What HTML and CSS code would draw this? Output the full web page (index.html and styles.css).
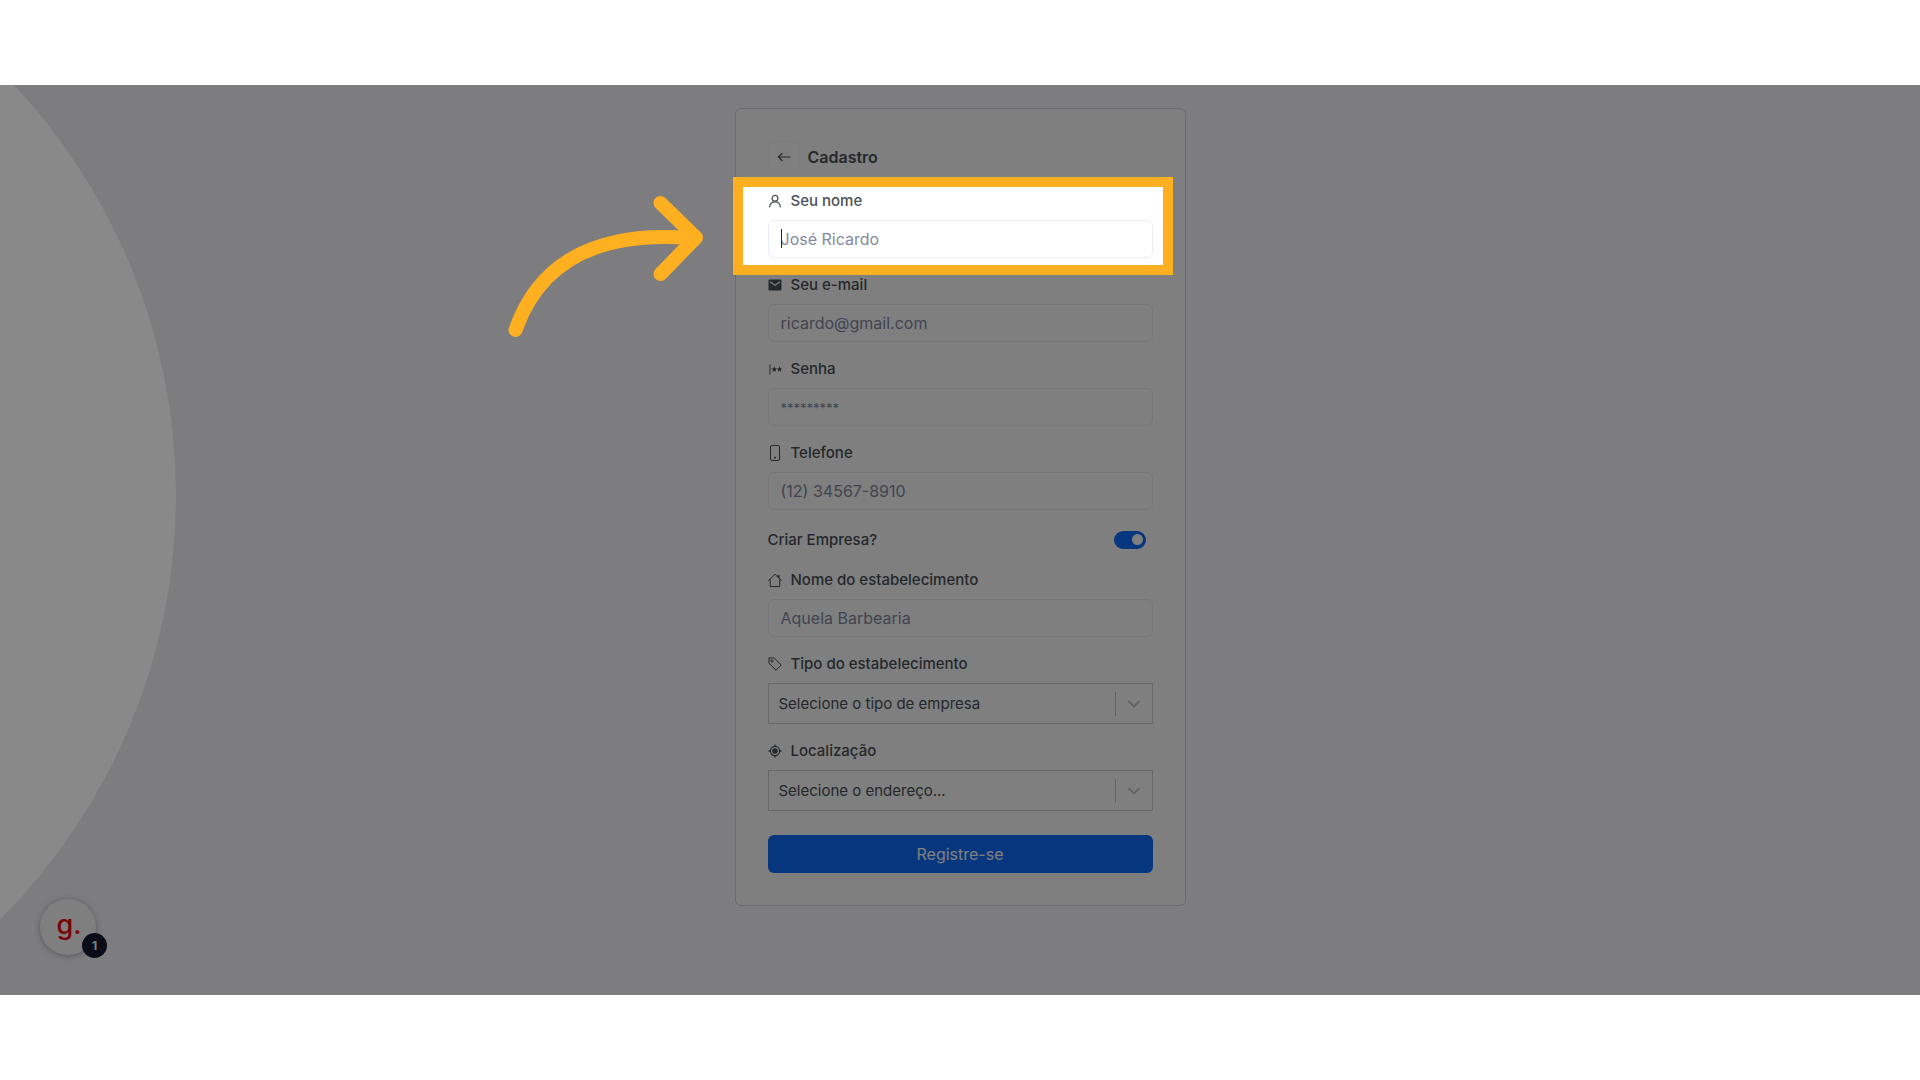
FILE: index.html
```html
<!DOCTYPE html>
<html lang="pt-BR">
<head>
<meta charset="utf-8">
<meta name="viewport" content="width=device-width, initial-scale=1">
<title>Cadastro</title>
<link rel="stylesheet" href="styles.css">
</head>
<body>
<main class="stage">
  <div class="backdrop-circle"></div>
  <form class="card">
    <header class="card-header">
      <button class="back" type="button" aria-label="Voltar">
        <svg width="14" height="14" viewBox="0 0 14 14" fill="none" stroke="currentColor" stroke-width="1.200" stroke-linecap="round" stroke-linejoin="round"><path d="M13 7H1.500M5 3.500 1.500 7 5 10.500"/></svg>
      </button>
      <h1 class="title">Cadastro</h1>
    </header>

    <div class="field highlighted">
      <label class="label" for="nome">
        <svg class="icon" viewBox="0 0 14 14" fill="none" stroke="currentColor" stroke-width="1.200" stroke-linecap="round"><circle cx="7" cy="4.300" r="2.900"/><path d="M1.700 13c.2-3.200 2.300-5.200 5.300-5.200s5.100 2 5.300 5.200"/></svg>
        Seu nome
      </label>
      <div class="caret-box"><input class="input" id="nome" type="text" placeholder="José Ricardo"></div>
      <div class="spotlight">
        <svg class="arrow" width="210" height="155" viewBox="500 190 210 155" fill="none" stroke="currentColor" stroke-width="14" stroke-linecap="round" stroke-linejoin="round"><path d="M515.500 330C537 268 590 230 690 238"/><path d="M660.500 203 696 237.500 660.500 274"/></svg>
      </div>
    </div>

    <div class="field">
      <label class="label" for="email">
        <svg class="icon" viewBox="0 0 14 14"><rect x=".5" y="1.500" width="13" height="11" rx="1.300" fill="currentColor"/><path class="cut" d="M2 3.700 7 7.200l5-3.500" fill="none" stroke-width="1.200"/></svg>
        Seu e-mail
      </label>
      <input class="input" id="email" type="email" placeholder="ricardo@gmail.com">
    </div>

    <div class="field">
      <label class="label" for="senha">
        <svg class="icon" viewBox="0 0 14 14" fill="currentColor"><path d="M1.500 2.500h1v10h-1z"/><path d="m6.300 4.300.8 1.900 2 .2-1.500 1.300.45 2-1.750-1.050L4.550 9.700 5 7.700 3.500 6.400l2-.2zM11.700 4.300l.8 1.900 1.500.2-1.300 1.300.45 2-1.450-1.050-1.750 1.050.45-2L8.900 6.400l2-.2z"/></svg>
        Senha
      </label>
      <input class="input" id="senha" type="password" placeholder="*********">
    </div>

    <div class="field">
      <label class="label" for="telefone">
        <svg class="icon icon-tall" viewBox="0 0 14 16" fill="none" stroke="currentColor"><rect x="2.500" y=".5" width="9" height="15" rx="1.500"/><circle cx="7" cy="12.700" r="1" fill="currentColor" stroke="none"/></svg>
        Telefone
      </label>
      <input class="input" id="telefone" type="tel" placeholder="(12) 34567-8910">
    </div>

    <div class="switch-row">
      <label class="label" for="empresa">Criar Empresa?</label>
      <input class="switch" id="empresa" type="checkbox" role="switch" checked>
    </div>

    <div class="field">
      <label class="label" for="estabelecimento">
        <svg class="icon" viewBox="0 0 14 14" fill="none" stroke="currentColor" stroke-linecap="round" stroke-linejoin="round"><path d="M.6 7.700 7 1.200l6.400 6.500M2.200 6.500v7h9.600v-7"/><path d="M10 2.200h1.300v3.200L10 4z" fill="currentColor" stroke-width=".5"/></svg>
        Nome do estabelecimento
      </label>
      <input class="input" id="estabelecimento" type="text" placeholder="Aquela Barbearia">
    </div>

    <div class="field">
      <label class="label" for="tipo">
        <svg class="icon" viewBox="0 0 14 14" fill="none" stroke="currentColor" stroke-linejoin="round"><path d="M.9.900h5.200l7.100 7.100-5.200 5.200L.9 6.100z"/><circle cx="3.900" cy="3.900" r="1.100"/></svg>
        Tipo do estabelecimento
      </label>
      <div class="select-box">
        <select class="select" id="tipo"><option>Selecione o tipo de empresa</option></select>
        <svg class="chevron" viewBox="0 0 38 24" fill="none" stroke="currentColor"><path d="M.5 0v24"/><path d="m14 9.500 5 5 5-5" stroke-width="2" stroke-linecap="round" stroke-linejoin="round"/></svg>
      </div>
    </div>

    <div class="field">
      <label class="label" for="local">
        <svg class="icon" viewBox="0 0 14 14" fill="none" stroke="currentColor"><circle cx="7" cy="7" r="4.600" stroke-width="1.100"/><circle cx="7" cy="7" r="2.700" fill="currentColor" stroke="none"/><path d="M7 .5v2M7 11.500v2M.5 7h2M11.500 7h2" stroke-width="1.300"/></svg>
        Localização
      </label>
      <div class="select-box">
        <select class="select" id="local"><option>Selecione o endereço...</option></select>
        <svg class="chevron" viewBox="0 0 38 24" fill="none" stroke="currentColor"><path d="M.5 0v24"/><path d="m14 9.500 5 5 5-5" stroke-width="2" stroke-linecap="round" stroke-linejoin="round"/></svg>
      </div>
    </div>

    <button class="submit" type="submit">Registre-se</button>
  </form>

  <button class="widget" type="button"><span class="logo">g.</span><span class="badge">1</span></button>
</main>
</body>
</html>
```
FILE: styles.css
```css
* {
  box-sizing: border-box;
}

body {
  margin: 0;
  min-height: 100vh;
  display: flex;
  flex-direction: column;
  justify-content: center;
  background: #fff;
  color: #495057;
  font-family: Inter, "Liberation Sans", sans-serif;
  font-size: 15px;
}

input,
select,
button {
  font: inherit;
  color: inherit;
}

.stage {
  position: relative;
  display: flex;
  justify-content: center;
  overflow: hidden;
  padding: 23px 16px 89px;
  background: #faf8ff;
}

/* Sits over the dimming layer */
.backdrop-circle {
  position: absolute;
  z-index: 3;
  top: -190px;
  left: -1024px;
  width: 1200px;
  height: 1200px;
  border-radius: 50%;
  background: #898989;
}

.card {
  display: flex;
  flex-direction: column;
  gap: 16px;
  width: 100%;
  max-width: 451px;
  padding: 32px;
  border: 1px solid #d4d4da;
  border-radius: 6px;
  background: #fff;
}

.card-header {
  display: flex;
  align-items: center;
  gap: 8px;
  margin-bottom: 2px;
}

.back {
  display: grid;
  place-items: center;
  width: 32px;
  height: 31px;
  padding: 0;
  border: 1px solid #f8f8f8;
  border-radius: 4px;
  background: none;
}

.title {
  margin: 0;
  font-size: 16px;
  font-weight: 600;
}

.field {
  display: flex;
  flex-direction: column;
  gap: 8px;
}

.label {
  display: flex;
  align-items: center;
  gap: 9px;
  font-weight: 500;
  line-height: 22px;
}

.icon {
  width: 14px;
  height: 14px;
}

.icon-tall {
  height: 16px;
}

.cut {
  stroke: #fff;
}

.input {
  width: 100%;
  height: 38px;
  padding: 0 12px;
  border: 1px solid #e9edf7;
  border-radius: 6px;
  background: #fff;
  font-size: 16px;
}

.input::placeholder {
  color: #8389a3;
  opacity: 1;
}

.input[type="password"]::placeholder {
  font-size: 13px;
}

.caret-box {
  position: relative;
  display: flex;
}

.caret-box::before {
  content: "";
  position: absolute;
  top: 9px;
  left: 13px;
  width: 1px;
  height: 19px;
  background: #212529;
}

.highlighted {
  position: relative;
  z-index: 2;
}

/* The spread shadow dims everything outside the frame */
.spotlight {
  position: absolute;
  inset: -13px -20px -17px -35px;
  border: 10px solid #ffb020;
  box-shadow: 0 0 0 4000px rgba(0, 0, 0, 0.5);
  pointer-events: none;
}

.arrow {
  position: absolute;
  top: 3px;
  left: -243px;
  color: #ffb020;
}

.switch-row {
  display: flex;
  align-items: center;
  justify-content: space-between;
  height: 27px;
  padding-right: 7px;
}

.switch {
  appearance: none;
  display: flex;
  align-items: center;
  justify-content: flex-end;
  width: 32px;
  height: 18px;
  margin: 0;
  padding: 0 3px;
  border-radius: 9px;
  background: #0d6efd;
}

.switch::before {
  content: "";
  width: 11px;
  height: 11px;
  border-radius: 50%;
  background: #fff;
}

.select-box {
  display: grid;
  align-items: center;
}

.select {
  grid-area: 1 / 1;
  appearance: none;
  width: 100%;
  height: 41px;
  padding: 0 48px 0 10px;
  border: 1px solid #d0d0d0;
  border-radius: 0;
  background: #fff;
}

.chevron {
  grid-area: 1 / 1;
  justify-self: end;
  width: 38px;
  height: 24px;
  color: #c8c8c8;
  pointer-events: none;
}

.submit {
  height: 38px;
  margin-top: 8px;
  border: 0;
  border-radius: 6px;
  background: #0d6efd;
  color: #fff;
  font-size: 16px;
}

.widget {
  position: absolute;
  bottom: 40px;
  left: 40px;
  display: grid;
  place-items: center;
  width: 56px;
  height: 56px;
  padding: 0 0 4px 2px;
  border: 0;
  border-radius: 50%;
  background: #fff;
  box-shadow: 0 1px 6px rgba(0, 0, 0, 0.3);
}

.logo {
  color: #f00008;
  font-size: 27px;
  font-weight: 500;
  line-height: 40px;
}

.badge {
  position: absolute;
  right: -11px;
  bottom: -3px;
  width: 25px;
  height: 25px;
  border-radius: 50%;
  background: #141a2e;
  color: #fff;
  font-size: 12px;
  font-weight: 700;
  line-height: 25px;
  text-align: center;
}
```
